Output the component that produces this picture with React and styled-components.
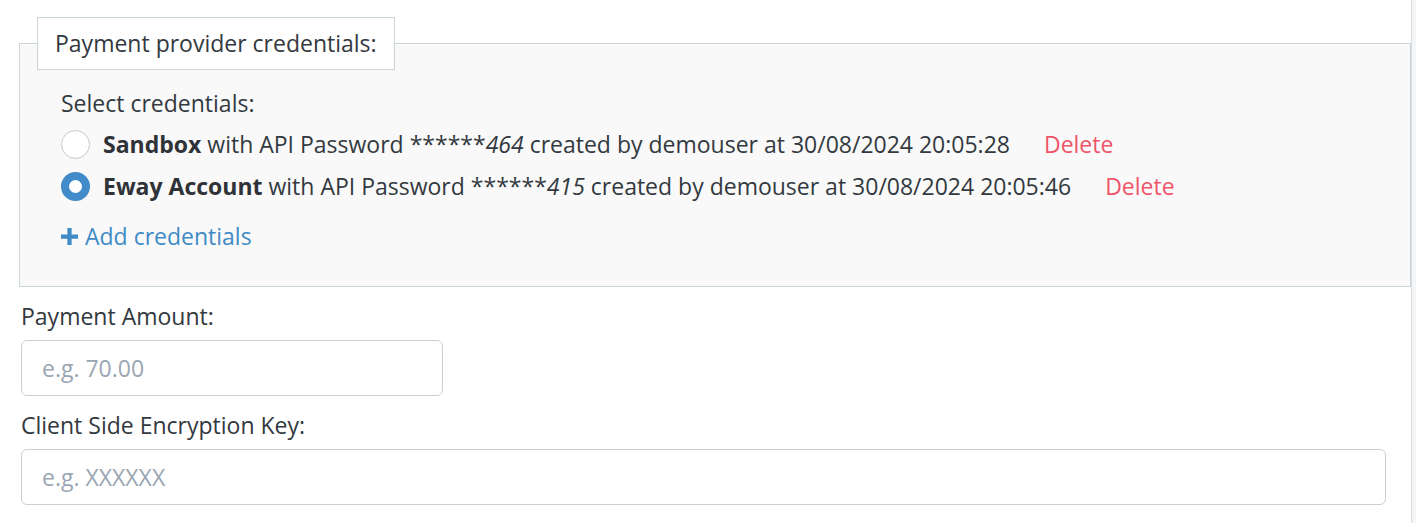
import React from 'react';
import styled, { createGlobalStyle } from 'styled-components';

const GlobalStyle = createGlobalStyle`
    html, body {
        margin: 0;
        padding: 0;
        background: #f4f5f6;
    }
    body {
        font-family: "Open Sans", "Liberation Sans", sans-serif;
        color: #333940;
    }
`;

const credentials = [
    {
        id: 1,
        name: 'Sandbox',
        suffix: '464',
        created: '30/08/2024 20:05:28',
        checked: false
    },
    {
        id: 2,
        name: 'Eway Account',
        suffix: '415',
        created: '30/08/2024 20:05:46',
        checked: true
    }
];

const PlusIcon = () => (
    <svg width="17" height="17" viewBox="0 0 16 16">
        <path d="M6 0h4v6h6v4h-6v6H6v-6H0V6h6z" fill="currentColor" />
    </svg>
);

export default function App() {
    return (
        <Page>
            <GlobalStyle />
            <Fieldset>
                <Legend>Payment provider credentials:</Legend>
                <Inner>
                    <Caption>Select credentials:</Caption>
                    <List>
                        {credentials.map(item => (
                            <Row key={item.id}>
                                <Radio checked={item.checked} />
                                <RowText>
                                    <Name>{item.name}</Name> with API Password ******
                                    <em>{item.suffix}</em> created by demouser at{' '}
                                    {item.created}
                                </RowText>
                                <DeleteLink>Delete</DeleteLink>
                            </Row>
                        ))}
                    </List>
                    <AddLink>
                        <PlusIcon />
                        Add credentials
                    </AddLink>
                </Inner>
            </Fieldset>
            <Label>Payment Amount:</Label>
            <Input placeholder="e.g. 70.00" width="422px" />
            <Label>Client Side Encryption Key:</Label>
            <Input placeholder="e.g. XXXXXX" width="1365px" />
        </Page>
    );
}

const Page = styled.div`
    width: 1412px;
    min-height: 523px;
    box-sizing: border-box;
    padding: 17px 0 0 19px;
    background: #ffffff;
    border-right: 1px solid #d9dde0;
    font-size: 23px;
    line-height: 30px;
`;

const Fieldset = styled.fieldset`
    margin: 0;
    padding: 0 17px 35px;
    border: 1px solid #c9d5d8;
    background: #f9f9f9;
`;

const Legend = styled.legend`
    padding: 10px 17px 11px;
    border: 1px solid #c9d5d8;
    background: #ffffff;
    font-size: 23px;
    line-height: 30px;
`;

const Inner = styled.div`
    padding: 18px 0 0 24px;
`;

const Caption = styled.div`
    margin-bottom: 5px;
`;

const List = styled.div`
    display: flex;
    flex-direction: column;
`;

const Row = styled.div`
    display: flex;
    align-items: center;
    height: 42px;
`;

const Radio = styled.span`
    width: 29px;
    height: 29px;
    box-sizing: border-box;
    border-radius: 50%;
    margin: 0 13px 0 0;
    flex-shrink: 0;
    background: #ffffff;
    border: ${props =>
        props.checked ? '8px solid #428bca' : '1px solid #c8c8c8'};
`;

const RowText = styled.span`
    white-space: nowrap;

    em {
        font-style: italic;
    }
`;

const Name = styled.b`
    font-weight: 700;
    color: #2f3237;
`;

const DeleteLink = styled.a`
    margin-left: 34px;
    color: #ef5569;
    cursor: pointer;
`;

const AddLink = styled.a`
    display: inline-flex;
    align-items: center;
    gap: 7px;
    margin-top: 14px;
    color: #3f8bc6;
    cursor: pointer;
`;

const Label = styled.div`
    margin: 14px 0 9px 2px;
`;

const Input = styled.input`
    display: block;
    width: ${props => props.width};
    height: 56px;
    box-sizing: border-box;
    margin-left: 2px;
    padding: 0 20px;
    border: 1px solid #c8d0d8;
    border-radius: 6px;
    background: #ffffff;
    font-family: "Open Sans", "Liberation Sans", sans-serif;
    font-size: 23px;
    color: #333940;

    &::placeholder {
        color: #9aa6b2;
    }
`;
